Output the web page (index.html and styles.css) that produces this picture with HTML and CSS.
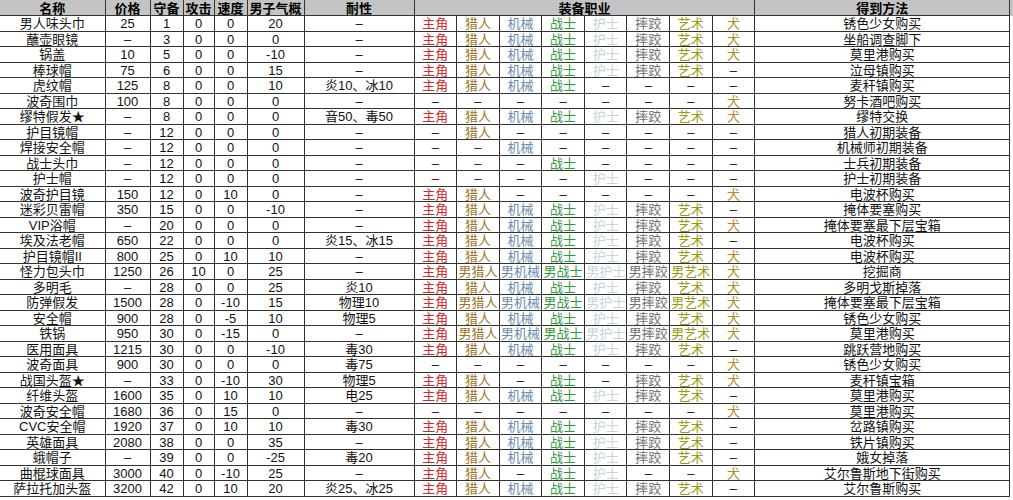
FILE: index.html
```html
<!DOCTYPE html>
<html lang="zh-CN">
<head>
<meta charset="utf-8">
<title>帽子装备一览</title>
<link rel="stylesheet" href="styles.css">
</head>
<body>
<div class="sheet">
<table class="equip">
<colgroup>
<col class="c-name"><col class="c-price"><col class="c-def"><col class="c-atk"><col class="c-spd"><col class="c-man"><col class="c-res">
<col class="c-job"><col class="c-job"><col class="c-job"><col class="c-job"><col class="c-job"><col class="c-job"><col class="c-job"><col class="c-job">
<col class="c-src">
</colgroup>
<thead>
<tr><th>名称</th><th>价格</th><th>守备</th><th>攻击</th><th>速度</th><th>男子气概</th><th>耐性</th><th colspan="8">装备职业</th><th>得到方法</th></tr>
</thead>
<tbody>
<tr><td>男人味头巾</td><td>25</td><td>1</td><td>0</td><td>0</td><td>20</td><td>–</td><td class="zj">主角</td><td class="lr">猎人</td><td class="jx">机械</td><td class="zs">战士</td><td class="hs">护士</td><td class="sj">摔跤</td><td class="ys">艺术</td><td class="q">犬</td><td>锈色少女购买</td></tr>
<tr><td>蘸壶眼镜</td><td>–</td><td>3</td><td>0</td><td>0</td><td>0</td><td>–</td><td class="zj">主角</td><td class="lr">猎人</td><td class="jx">机械</td><td class="zs">战士</td><td class="hs">护士</td><td class="sj">摔跤</td><td class="ys">艺术</td><td class="q">犬</td><td>坐船调查脚下</td></tr>
<tr><td>锅盖</td><td>10</td><td>5</td><td>0</td><td>0</td><td>-10</td><td>–</td><td class="zj">主角</td><td class="lr">猎人</td><td class="jx">机械</td><td class="zs">战士</td><td class="hs">护士</td><td class="sj">摔跤</td><td class="ys">艺术</td><td class="q">犬</td><td>莫里港购买</td></tr>
<tr><td>棒球帽</td><td>75</td><td>6</td><td>0</td><td>0</td><td>15</td><td>–</td><td class="zj">主角</td><td class="lr">猎人</td><td class="jx">机械</td><td class="zs">战士</td><td class="hs">护士</td><td class="sj">摔跤</td><td class="ys">艺术</td><td>–</td><td>泣母镇购买</td></tr>
<tr><td>虎纹帽</td><td>125</td><td>8</td><td>0</td><td>0</td><td>10</td><td>炎10、冰10</td><td class="zj">主角</td><td class="lr">猎人</td><td class="jx">机械</td><td class="zs">战士</td><td>–</td><td>–</td><td>–</td><td>–</td><td>麦秆镇购买</td></tr>
<tr><td>波奇围巾</td><td>100</td><td>8</td><td>0</td><td>0</td><td>0</td><td>–</td><td>–</td><td>–</td><td>–</td><td>–</td><td>–</td><td>–</td><td>–</td><td class="q">犬</td><td>努卡酒吧购买</td></tr>
<tr><td>缪特假发★</td><td>–</td><td>8</td><td>0</td><td>0</td><td>0</td><td>音50、毒50</td><td class="zj">主角</td><td class="lr">猎人</td><td class="jx">机械</td><td class="zs">战士</td><td class="hs">护士</td><td class="sj">摔跤</td><td class="ys">艺术</td><td class="q">犬</td><td>缪特交换</td></tr>
<tr><td>护目镜帽</td><td>–</td><td>12</td><td>0</td><td>0</td><td>0</td><td>–</td><td>–</td><td class="lr">猎人</td><td>–</td><td>–</td><td>–</td><td>–</td><td>–</td><td>–</td><td>猎人初期装备</td></tr>
<tr><td>焊接安全帽</td><td>–</td><td>12</td><td>0</td><td>0</td><td>0</td><td>–</td><td>–</td><td>–</td><td class="jx">机械</td><td>–</td><td>–</td><td>–</td><td>–</td><td>–</td><td>机械师初期装备</td></tr>
<tr><td>战士头巾</td><td>–</td><td>12</td><td>0</td><td>0</td><td>0</td><td>–</td><td>–</td><td>–</td><td>–</td><td class="zs">战士</td><td>–</td><td>–</td><td>–</td><td>–</td><td>士兵初期装备</td></tr>
<tr><td>护士帽</td><td>–</td><td>12</td><td>0</td><td>0</td><td>0</td><td>–</td><td>–</td><td>–</td><td>–</td><td>–</td><td class="hs">护士</td><td>–</td><td>–</td><td>–</td><td>护士初期装备</td></tr>
<tr><td>波奇护目镜</td><td>150</td><td>12</td><td>0</td><td>10</td><td>0</td><td>–</td><td class="zj">主角</td><td class="lr">猎人</td><td>–</td><td>–</td><td>–</td><td>–</td><td>–</td><td class="q">犬</td><td>电波杯购买</td></tr>
<tr><td>迷彩贝雷帽</td><td>350</td><td>15</td><td>0</td><td>0</td><td>-10</td><td>–</td><td class="zj">主角</td><td class="lr">猎人</td><td class="jx">机械</td><td class="zs">战士</td><td class="hs">护士</td><td class="sj">摔跤</td><td class="ys">艺术</td><td>–</td><td>掩体要塞购买</td></tr>
<tr><td>VIP浴帽</td><td>–</td><td>20</td><td>0</td><td>0</td><td>0</td><td>–</td><td class="zj">主角</td><td class="lr">猎人</td><td class="jx">机械</td><td class="zs">战士</td><td class="hs">护士</td><td class="sj">摔跤</td><td class="ys">艺术</td><td class="q">犬</td><td>掩体要塞最下层宝箱</td></tr>
<tr><td>埃及法老帽</td><td>650</td><td>22</td><td>0</td><td>0</td><td>0</td><td>炎15、冰15</td><td class="zj">主角</td><td class="lr">猎人</td><td class="jx">机械</td><td class="zs">战士</td><td class="hs">护士</td><td class="sj">摔跤</td><td class="ys">艺术</td><td>–</td><td>电波杯购买</td></tr>
<tr><td>护目镜帽II</td><td>800</td><td>25</td><td>0</td><td>10</td><td>10</td><td>–</td><td class="zj">主角</td><td class="lr">猎人</td><td class="jx">机械</td><td class="zs">战士</td><td class="hs">护士</td><td class="sj">摔跤</td><td class="ys">艺术</td><td class="q">犬</td><td>电波杯购买</td></tr>
<tr><td>怪力包头巾</td><td>1250</td><td>26</td><td>10</td><td>0</td><td>25</td><td>–</td><td class="zj">主角</td><td class="lr">男猎人</td><td class="jx">男机械</td><td class="zs">男战士</td><td class="hs">男护士</td><td class="sj">男摔跤</td><td class="ys">男艺术</td><td class="q">犬</td><td>挖掘商</td></tr>
<tr><td>多明毛</td><td>–</td><td>28</td><td>0</td><td>0</td><td>25</td><td>炎10</td><td class="zj">主角</td><td class="lr">猎人</td><td class="jx">机械</td><td class="zs">战士</td><td class="hs">护士</td><td class="sj">摔跤</td><td class="ys">艺术</td><td class="q">犬</td><td>多明戈斯掉落</td></tr>
<tr><td>防弹假发</td><td>1500</td><td>28</td><td>0</td><td>-10</td><td>15</td><td>物理10</td><td class="zj">主角</td><td class="lr">男猎人</td><td class="jx">男机械</td><td class="zs">男战士</td><td class="hs">男护士</td><td class="sj">男摔跤</td><td class="ys">男艺术</td><td class="q">犬</td><td>掩体要塞最下层宝箱</td></tr>
<tr><td>安全帽</td><td>900</td><td>28</td><td>0</td><td>-5</td><td>10</td><td>物理5</td><td class="zj">主角</td><td class="lr">猎人</td><td class="jx">机械</td><td class="zs">战士</td><td class="hs">护士</td><td class="sj">摔跤</td><td class="ys">艺术</td><td class="q">犬</td><td>锈色少女购买</td></tr>
<tr><td>铁锅</td><td>950</td><td>30</td><td>0</td><td>-15</td><td>0</td><td>–</td><td class="zj">主角</td><td class="lr">男猎人</td><td class="jx">男机械</td><td class="zs">男战士</td><td class="hs">男护士</td><td class="sj">男摔跤</td><td class="ys">男艺术</td><td class="q">犬</td><td>莫里港购买</td></tr>
<tr><td>医用面具</td><td>1215</td><td>30</td><td>0</td><td>0</td><td>-10</td><td>毒30</td><td class="zj">主角</td><td class="lr">猎人</td><td class="jx">机械</td><td class="zs">战士</td><td class="hs">护士</td><td class="sj">摔跤</td><td class="ys">艺术</td><td>–</td><td>跳跃营地购买</td></tr>
<tr><td>波奇面具</td><td>900</td><td>30</td><td>0</td><td>0</td><td>0</td><td>毒75</td><td>–</td><td>–</td><td>–</td><td>–</td><td>–</td><td>–</td><td>–</td><td class="q">犬</td><td>锈色少女购买</td></tr>
<tr><td>战国头盔★</td><td>–</td><td>33</td><td>0</td><td>-10</td><td>30</td><td>物理5</td><td class="zj">主角</td><td class="lr">猎人</td><td>–</td><td class="zs">战士</td><td>–</td><td class="sj">摔跤</td><td class="ys">艺术</td><td class="q">犬</td><td>麦秆镇宝箱</td></tr>
<tr><td>纤维头盔</td><td>1600</td><td>35</td><td>0</td><td>10</td><td>10</td><td>电25</td><td class="zj">主角</td><td class="lr">猎人</td><td class="jx">机械</td><td class="zs">战士</td><td class="hs">护士</td><td class="sj">摔跤</td><td class="ys">艺术</td><td>–</td><td>莫里港购买</td></tr>
<tr><td>波奇安全帽</td><td>1680</td><td>36</td><td>0</td><td>15</td><td>0</td><td>–</td><td>–</td><td>–</td><td>–</td><td>–</td><td>–</td><td>–</td><td>–</td><td class="q">犬</td><td>莫里港购买</td></tr>
<tr><td>CVC安全帽</td><td>1920</td><td>37</td><td>0</td><td>10</td><td>10</td><td>毒30</td><td class="zj">主角</td><td class="lr">猎人</td><td class="jx">机械</td><td class="zs">战士</td><td class="hs">护士</td><td class="sj">摔跤</td><td class="ys">艺术</td><td>–</td><td>岔路镇购买</td></tr>
<tr><td>英雄面具</td><td>2080</td><td>38</td><td>0</td><td>0</td><td>35</td><td>–</td><td class="zj">主角</td><td class="lr">猎人</td><td class="jx">机械</td><td class="zs">战士</td><td class="hs">护士</td><td class="sj">摔跤</td><td class="ys">艺术</td><td>–</td><td>铁片镇购买</td></tr>
<tr><td>蛾帽子</td><td>–</td><td>39</td><td>0</td><td>0</td><td>-25</td><td>毒20</td><td class="zj">主角</td><td class="lr">猎人</td><td class="jx">机械</td><td class="zs">战士</td><td class="hs">护士</td><td class="sj">摔跤</td><td class="ys">艺术</td><td>–</td><td>娥女掉落</td></tr>
<tr><td>曲棍球面具</td><td>3000</td><td>40</td><td>0</td><td>-10</td><td>25</td><td>–</td><td class="zj">主角</td><td class="lr">猎人</td><td>–</td><td class="zs">战士</td><td class="hs">护士</td><td>–</td><td>–</td><td class="q">犬</td><td>艾尔鲁斯地下街购买</td></tr>
<tr><td>萨拉托加头盔</td><td>3200</td><td>42</td><td>0</td><td>10</td><td>20</td><td>炎25、冰25</td><td class="zj">主角</td><td class="lr">猎人</td><td class="jx">机械</td><td class="zs">战士</td><td class="hs">护士</td><td class="sj">摔跤</td><td class="ys">艺术</td><td>–</td><td>艾尔鲁斯购买</td></tr>
</tbody>
</table>
</div>
</body>
</html>
```

FILE: styles.css
```css
html, body {
  margin: 0;
  padding: 0;
  background: #ffffff;
}

.sheet {
  width: 1013px;
  background: linear-gradient(#c4c4c4 0, #c4c4c4 16px, #ffffff 16px);
}

.equip {
  width: 1010px;
  border-collapse: collapse;
  table-layout: fixed;
  font-family: "Liberation Sans", "Noto Sans CJK SC", sans-serif;
  font-size: 13px;
  color: #111111;
}

.c-name { width: 105px; }
.c-price { width: 45px; }
.c-def { width: 33px; }
.c-atk { width: 31px; }
.c-spd { width: 33px; }
.c-man { width: 57px; }
.c-res { width: 110px; }
.c-job { width: 42.6px; }
.c-src { width: 255px; }

.equip th,
.equip td {
  padding: 1px 0 0;
  border: 1px solid #333333;
  text-align: center;
  vertical-align: middle;
  white-space: nowrap;
  overflow: hidden;
  line-height: 13px;
}

.equip th {
  height: 14px;
  background: #c4c4c4;
  font-weight: bold;
  color: #000000;
  border-top: none;
}

.equip th:first-child,
.equip td:first-child {
  border-left: none;
}

.equip tbody tr {
  height: 15.5px;
}

.equip .zj { color: #d02a2a; }
.equip .lr { color: #9c7428; }
.equip .jx { color: #6a8cb0; }
.equip .zs { color: #2f9a3a; }
.equip .hs { color: #c4d4dc; }
.equip .sj { color: #707070; }
.equip .ys { color: #9a9a10; }
.equip .q { color: #b88a2c; }
```
